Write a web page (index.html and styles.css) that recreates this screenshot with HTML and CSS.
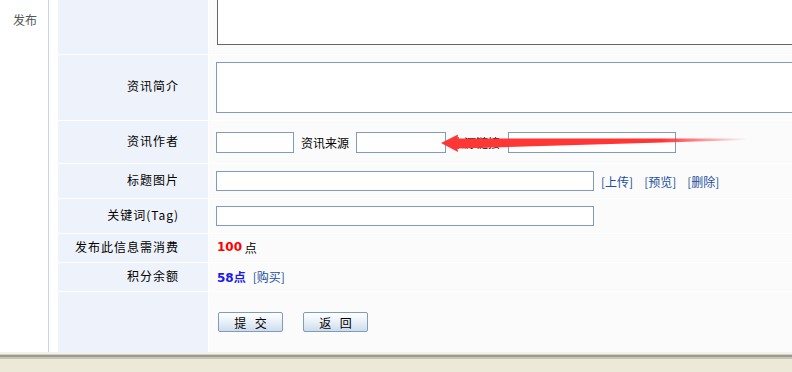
FILE: index.html
```html
<!DOCTYPE html>
<html lang="zh-CN">
<head>
  <meta charset="UTF-8" />
  <title>发布资讯</title>
  <link rel="stylesheet" href="styles.css">
</head>
<body>

  <div class="page">
    <aside class="side">发布</aside>

    <div class="form">
      <div class="label"></div>
      <div class="value"><textarea class="content-box"></textarea></div>

      <div class="label">资讯简介</div>
      <div class="value"><textarea class="intro-box"></textarea></div>

      <div class="label">资讯作者</div>
      <div class="value">
        <input class="txt author" type="text">
        <span class="inline-label">资讯来源</span>
        <input class="txt source" type="text">
        <span class="inline-label link-label">来源链接</span>
        <input class="txt source-url" type="text">
      </div>

      <div class="label">标题图片</div>
      <div class="value">
        <input class="txt wide" type="text">
        <span class="links"><a href="#">[上传]</a><a href="#">[预览]</a><a href="#">[删除]</a></span>
      </div>

      <div class="label">关键词(Tag)</div>
      <div class="value"><input class="txt wide" type="text"></div>

      <div class="label">发布此信息需消费</div>
      <div class="value text-value"><b class="cost">100</b>&nbsp;点</div>

      <div class="label">积分余额</div>
      <div class="value text-value"><b class="balance">58点</b><a class="buy" href="#">[购买]</a></div>

      <div class="label"></div>
      <div class="value buttons">
        <button type="button">提 交</button>
        <button type="button">返 回</button>
      </div>
    </div>
  </div>

  <div class="statusbar"></div>

  <!-- red annotation arrow drawn over the form -->
  <svg class="arrow" width="792" height="372" viewBox="0 0 792 372">
    <defs>
      <linearGradient id="fade" x1="441" y1="0" x2="748" y2="0" gradientUnits="userSpaceOnUse">
        <stop offset="0" stop-color="#ff3636"/>
        <stop offset="0.72" stop-color="#ff3636"/>
        <stop offset="1" stop-color="#ff3636" stop-opacity="0"/>
      </linearGradient>
    </defs>
    <polygon fill="url(#fade)" points="441,143 458,134.5 457.5,138.5 748,138.5 748,140 457.5,148.5 458,152"/>
  </svg>

</body>
</html>
```

FILE: styles.css
```css
* { box-sizing: border-box; margin: 0; padding: 0; }
html, body { height: 100%; }
body {
  background: #fff;
  color: #000;
  font-family: "Noto Sans CJK SC", "Liberation Sans", sans-serif;
  font-size: 12px;
  overflow: hidden;
  position: relative;
}

.page {
  display: flex;
  height: 352px;
}
.side {
  width: 49px;
  flex: none;
  border-right: 1px solid #c6d6ea;
  color: #555;
  padding: 12px 0 0 13px;
  line-height: 16px;
}

.form {
  margin-left: 9px;
  flex: 1;
  display: grid;
  grid-template-columns: 150px 1fr;
  grid-template-rows: 54px 65px 42px 34px 34px 28px 28px 60px;
  gap: 1px;
  background: #fff;
  overflow: hidden;
}
.label {
  background: #eef3fb;
  padding: 0 29px 3px 0;
  letter-spacing: 1px;
  line-height: 16px;
  display: flex;
  align-items: center;
  justify-content: flex-end;
  white-space: nowrap;
}
.value {
  background: #fbfbfb;
  display: flex;
  align-items: center;
  padding-left: 7px;
  white-space: nowrap;
  min-width: 0;
  overflow: hidden;
}

.content-box {
  align-self: flex-start;
  margin-left: 1px;
  width: 900px;
  height: 45px;
  flex: none;
  border: 1px solid #666;
  border-top: 0;
  background: #fff;
  resize: none;
}
.intro-box {
  width: 900px;
  height: 51px;
  flex: none;
  margin-top: -1px;
  border: 1px solid #7f9db9;
  background: #fff;
  resize: none;
}

.txt {
  border: 1px solid #7f9db9;
  background: #fff;
  height: 20px;
  flex: none;
}
.author { width: 78px; height: 21px; }
.source { width: 90px; height: 21px; }
.source-url { width: 168px; height: 21px; }
.wide { width: 378px; }
.inline-label { margin: 0 7px; }
.link-label { margin: 0 8px 0 6px; }

a { color: #1c4f9c; text-decoration: none; }
.links { margin-left: 7px; }
.links a { margin-right: 11px; }

.text-value { padding: 0 0 2px 8px; }
.cost {
  color: #ff0000;
  font-family: "DejaVu Sans", sans-serif;
  font-size: 12px;
}
.balance {
  color: #1a1aee;
  font-family: "DejaVu Sans", "Noto Sans CJK SC", sans-serif;
}
.buy { margin-left: 7px; }

.buttons { padding-left: 9px; }
.buttons button {
  width: 65px;
  height: 20px;
  margin-right: 20px;
  border: 1px solid #7f9db9;
  border-radius: 2px;
  background: linear-gradient(#ffffff, #e6eef7 55%, #cddcec);
  font-family: "Noto Sans CJK SC", sans-serif;
  font-size: 12px;
  letter-spacing: 3px;
  text-indent: 3px;
  color: #000;
}

.statusbar {
  height: 20px;
  background: linear-gradient(#f3f1ea 0 2px, #d6d2c2 2px 3px, #9c9b93 3px 5px, #c8c4b4 5px 7px, #ece9d8 7px);
}

.arrow {
  position: absolute;
  left: 0;
  top: 0;
  pointer-events: none;
}
```
